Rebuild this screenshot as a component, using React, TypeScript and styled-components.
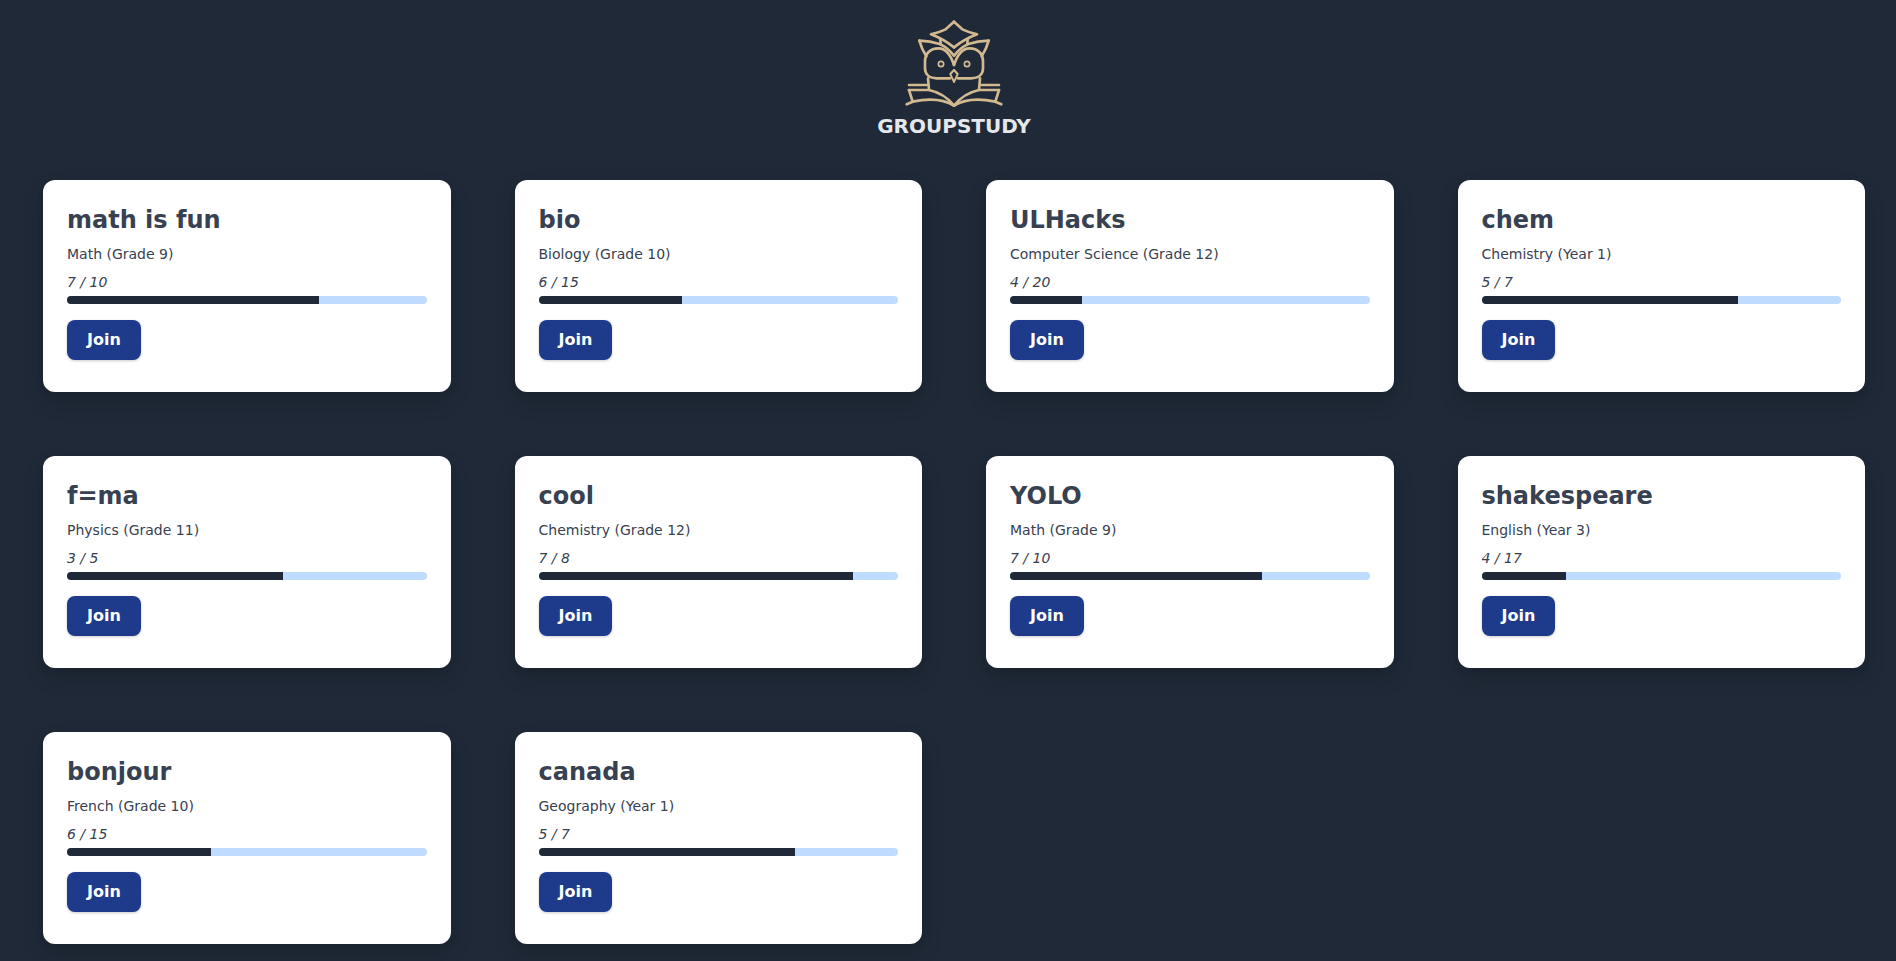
import styled, { createGlobalStyle } from 'styled-components';

const GlobalStyle = createGlobalStyle`
  html, body {
    margin: 0;
    background: #1f2937;
    font-family: "DejaVu Sans", sans-serif;
  }

  * {
    box-sizing: border-box;
  }
`

const Page = styled.div`
  min-height: 961px;
  padding: 15px 31px 17px 43px;
  background: #1f2937;
`

const Header = styled.header`
  display: flex;
  flex-direction: column;
  align-items: center;
  height: 165px;
`

const Logo = styled.svg`
  display: block;
  width: 100px;
  height: 100px;
`

const Brand = styled.h1`
  margin: -3px 0 0;
  font-size: 20px;
  line-height: 28px;
  font-weight: 700;
  color: #e5e7eb;
`

const Grid = styled.main`
  display: grid;
  grid-template-columns: repeat(4, 1fr);
  gap: 64px;
`

const Card = styled.article`
  height: 212px;
  padding: 24px;
  background: #ffffff;
  border-radius: 12px;
  box-shadow: 0 10px 25px -3px rgba(0, 0, 0, 0.16), 0 4px 10px -2px rgba(0, 0, 0, 0.08);
  color: #374151;
`

const Title = styled.h2`
  margin: 0 0 8px;
  font-size: 24px;
  line-height: 32px;
  font-weight: 700;
`

const Subject = styled.p`
  margin: 0 0 8px;
  font-size: 14px;
  line-height: 20px;
`

const Count = styled.div`
  margin-top: 8px;
  font-size: 14px;
  line-height: 20px;
  font-style: italic;
`

const Track = styled.div`
  margin-top: 4px;
  height: 8px;
  background: #bfdbfe;
  border-radius: 4px;
  overflow: hidden;
`

const Fill = styled.div`
  height: 100%;
  background: #1f2937;
`

const JoinButton = styled.button`
  display: block;
  margin-top: 16px;
  padding: 0 20px 1px;
  height: 40px;
  background: #1e3a8a;
  border: none;
  border-radius: 8px;
  box-shadow: 0 1px 3px rgba(0, 0, 0, 0.2);
  color: #ffffff;
  font-family: inherit;
  font-size: 16px;
  font-weight: 700;
`

const groups = [
  { name: 'math is fun', subject: 'Math (Grade 9)', current: 7, total: 10 },
  { name: 'bio', subject: 'Biology (Grade 10)', current: 6, total: 15 },
  { name: 'ULHacks', subject: 'Computer Science (Grade 12)', current: 4, total: 20 },
  { name: 'chem', subject: 'Chemistry (Year 1)', current: 5, total: 7 },
  { name: 'f=ma', subject: 'Physics (Grade 11)', current: 3, total: 5 },
  { name: 'cool', subject: 'Chemistry (Grade 12)', current: 7, total: 8 },
  { name: 'YOLO', subject: 'Math (Grade 9)', current: 7, total: 10 },
  { name: 'shakespeare', subject: 'English (Year 3)', current: 4, total: 17 },
  { name: 'bonjour', subject: 'French (Grade 10)', current: 6, total: 15 },
  { name: 'canada', subject: 'Geography (Year 1)', current: 5, total: 7 },
]

const OwlHalf = () => (
  <>
    <path d="M162 20 L137 43 Q118 52 93 58 Q130 72 162 97" />
    <path d="M121 72 L122 88" />
    <path d="M58 77 Q90 78 122 88 Q145 100 162 122" />
    <path d="M58 77 Q64 100 79 124" />
    <path d="M162 150 C152 120 138 100 116 100 C88 100 75 118 75 140 L75 160 C75 180 90 190 110 190 L150 190" />
    <path d="M84 190 L87 225" />
    <path d="M27 210 L80 210" />
    <path d="M27 225 L87 225 C120 232 145 250 162 272" />
    <path d="M27 225 L38 260 C85 250 130 252 162 272 M20 268 L38 260" />
    <circle cx="123" cy="147" r="8" strokeWidth="5" />
    <path d="M162 165 L151 177 Q155 188 162 200" strokeWidth="6" />
  </>
)

export default function App() {
  return (
    <Page>
      <GlobalStyle />
      <Header>
        <Logo viewBox="12 0 300 300" fill="none" stroke="#d2b98f" strokeWidth="8" strokeLinecap="round" strokeLinejoin="round">
          <OwlHalf />
          <g transform="translate(324 0) scale(-1 1)">
            <OwlHalf />
          </g>
        </Logo>
        <Brand>GROUPSTUDY</Brand>
      </Header>
      <Grid>
        {groups.map((group) => (
          <Card key={group.name}>
            <Title>{group.name}</Title>
            <Subject>{group.subject}</Subject>
            <Count>{group.current} / {group.total}</Count>
            <Track>
              <Fill style={{ width: `${(group.current / group.total) * 100}%` }} />
            </Track>
            <JoinButton>Join</JoinButton>
          </Card>
        ))}
      </Grid>
    </Page>
  );
}
